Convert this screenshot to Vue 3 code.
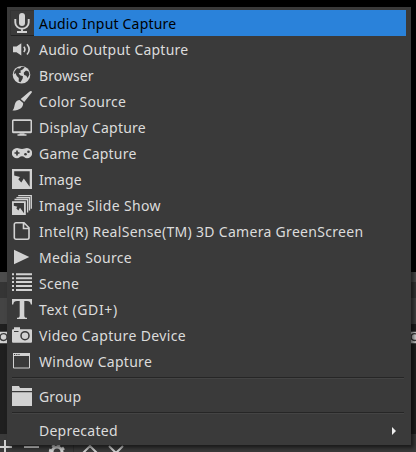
<script setup>
const items = [
  { icon: 'mic', label: 'Audio Input Capture', active: true, tracking: 0.19 },
  { icon: 'speaker', label: 'Audio Output Capture', tracking: 0.22 },
  { icon: 'globe', label: 'Browser', tracking: 0.05 },
  { icon: 'brush', label: 'Color Source', tracking: 0.28 },
  { icon: 'display', label: 'Display Capture', tracking: 0.2 },
  { icon: 'game', label: 'Game Capture', tracking: 0.2 },
  { icon: 'image', label: 'Image', tracking: 0.1 },
  { icon: 'slides', label: 'Image Slide Show', tracking: 0.34 },
  { icon: 'file', label: 'Intel(R) RealSense(TM) 3D Camera GreenScreen', tracking: 0.3 },
  { icon: 'play', label: 'Media Source', tracking: 0.31 },
  { icon: 'list', label: 'Scene', tracking: 0.25 },
  { icon: 'text', label: 'Text (GDI+)', tracking: 0.6 },
  { icon: 'camera', label: 'Video Capture Device', tracking: 0.36 },
  { icon: 'window', label: 'Window Capture', tracking: 0.28 },
  { separator: true },
  { icon: 'folder', label: 'Group', tracking: 0.15 },
  { separator: true },
  { label: 'Deprecated', submenu: true, tracking: 0.25 },
]

const icons = {
  mic: '<rect x="7" y="0" width="6" height="13" rx="3"/><path d="M3.3 6v3.5a6.7 6.2 0 0 0 13.4 0V6M10 15.5V19M5 19h10" fill="none" stroke="currentColor" stroke-width="1.9"/>',
  speaker: '<path d="M1 7.600h3.500L9.300 4.300v12.200L4.500 13.200H1z"/><path d="M11.800 7.800q2.200 2.600 0 5.200M15 5.300q4.300 5.100 0 10.200" fill="none" stroke="currentColor" stroke-width="1.600"/>',
  globe: '<circle cx="9.5" cy="9.7" r="8.8"/><path d="M9.500 1.700 12.700 2 11 4.300 8.300 5.800 9 7.600 6.700 8.300 8 10.200l3 1.100-.4 2.500-2.100 3.400-1.800-.6.1-3.600-2-2.100-1.400-3L1.900 9.600l.5-3L5 3.300 8 3.500zM14 5.500l2.500 1 .9 3-1.800 3.400-1.300-2.100-2.100-.7-.5-2.400z" fill="#3a3a3a"/>',
  brush: '<path d="M19.5.2c.6.4.5 1-.1 1.8l-7.2 9-3.5-3.1L17.3.8c.9-.7 1.6-.9 2.2-.6zM7.6 9l3.5 3.1c.4 3.9-2.9 7.3-10.6 7.5 2.2-2.6 1.6-5 2.8-7.6C4.200 10.100 5.800 9.200 7.600 9z"/>',
  display: '<path d="M1.500 2.300h17A1.500 1.500 0 0 1 20 3.800v11a1.500 1.500 0 0 1-1.500 1.500h-17A1.500 1.500 0 0 1 0 14.800v-11a1.500 1.500 0 0 1 1.500-1.500zm0 1.700v10.200h17V4zM7.500 16h5v1.200h2v1.500h-9v-1.500h2z" fill-rule="evenodd"/>',
  game: '<path d="M5 5c2 0 2.500 1 5 1s3-1 5-1a5 5 0 0 1 0 10.300c-2.300 0-2.700-2-5-2s-2.700 2-5 2A5 5 0 0 1 5 5z"/><path d="M2.500 10h5M5 7.500v5" stroke="#3a3a3a" stroke-width="1.700"/><circle cx="13.500" cy="11.200" r="1.300" fill="#3a3a3a"/><circle cx="16.500" cy="8.700" r="1.300" fill="#3a3a3a"/>',
  image: '<path d="M0 0h20v20H0z"/><path d="M2.200 2.300h15.500v15.400L11.800 9.500 9.300 13.500 6.300 10.200 8 8 2.200 6.500z" fill="#3a3a3a"/>',
  slides: '<path d="M6.200.7h13.100v13M4.400 2.600h13.100v13M2.500 4.500h13.100v13" fill="none" stroke="currentColor" stroke-width="1.300"/><path d="M0 6.200h13.800V20H0z"/><path d="M1.800 8h10.200v10.200L8 12.800l-1.700 2.700-2-2.200 1.100-1.500-3.600-1z" fill="#3a3a3a"/>',
  file: '<path d="M4 1.800h8l5 5v9.700a1.700 1.700 0 0 1-1.700 1.700H4a1.700 1.700 0 0 1-1.700-1.700v-13A1.700 1.700 0 0 1 4 1.800zM11.500 2v5.500H17" fill="none" stroke="currentColor" stroke-width="1.600"/>',
  play: '<path d="M2 2.700 17.300 10 2 17.300z"/>',
  list: '<path d="M4 .3h16v2H4zm0 3.900h16v2H4zm0 3.900h16v2H4zm0 3.900h16v2H4zm0 3.900h16v2H4zM0 .3h2v2H0zm0 3.900h2v2H0zm0 3.900h2v2H0zm0 3.900h2v2H0zm0 3.900h2v2H0z"/>',
  text: '<path d="M0 0h20v5.500h-1.200C18.300 2.800 17.400 2 15 2h-2.700v14.500c0 1.800.7 2.300 2.700 2.300V20H5v-1.200c2 0 2.700-.5 2.700-2.300V2H5C2.600 2 1.700 2.800 1.200 5.500H0z"/>',
  camera: '<path d="M2 2.300h6v2h11a1 1 0 0 1 1 1v11.500a1 1 0 0 1-1 1H1a1 1 0 0 1-1-1V5.300a1 1 0 0 1 1-1h1z"/><circle cx="13" cy="10.700" r="4" fill="none" stroke="#3a3a3a" stroke-width="1.500"/><path d="M2 6.500h4.500" stroke="#3a3a3a"/>',
  window: '<path d="M1.500 2.500h16v14.500h-16z" fill="none" stroke="currentColor" stroke-width="1"/><path d="M1 2h17v3H1z"/><path d="M2 3.500h1.200m1 0h1.200m1 0h1.200" stroke="#3a3a3a"/>',
  folder: '<path d="M0 0h7l1 2H20v3H0zM0 6.300h20V20H0z"/>',
}
</script>

<template>
  <div class="desktop">
    <div class="preview"></div>
    <div class="strip"></div>
    <div class="gap"></div>
    <div class="header"></div>
    <div class="dock">
      <svg class="peek" viewBox="0 0 20 20" v-html="icons.camera"></svg>
      <svg class="peek" viewBox="0 0 20 20" v-html="icons.camera"></svg>
    </div>
    <div class="toolbar">
      <svg width="140" height="18" viewBox="0 434 140 18" fill="none" stroke="#d2d2d2" stroke-width="2">
        <path d="M-2 447H12M5 440V454M24 447H39M83 453l7-7 7 7M109 446l7 7 7-7" />
        <circle cx="57" cy="452" r="5" stroke-width="3" />
        <circle cx="57" cy="452" r="7" stroke-width="2.500" stroke-dasharray="3 2.500" />
        <path d="M73.500 445V452" stroke="#303030" stroke-width="1" />
      </svg>
    </div>

    <nav class="menu">
      <template v-for="(item, i) in items" :key="i">
        <div v-if="item.separator" class="separator"></div>
        <div v-else class="row" :class="{ active: item.active, submenu: item.submenu }">
          <span class="icon">
            <svg v-if="item.icon" width="20" height="20" viewBox="0 0 20 20" fill="currentColor" v-html="icons[item.icon]"></svg>
          </span>
          <span class="label" :style="{ letterSpacing: item.tracking + 'px' }">{{ item.label }}</span>
          <svg v-if="item.submenu" class="arrow" width="4" height="8" viewBox="0 0 4 8"><path d="M0 0 4 4 0 8z" fill="#eee" /></svg>
        </div>
      </template>
    </nav>
  </div>
</template>

<style>
body { margin: 0; overflow: hidden; background: #000; }
</style>

<style scoped>
.desktop {
  position: relative;
  display: flex;
  flex-direction: column;
  width: 416px;
  height: 452px;
  overflow: hidden;
  background: #000;
}
.preview { height: 272px; background: #000; }
.strip { height: 10px; background: #4c4c4c; }
.gap { height: 16px; background: #353535; }
.header { height: 26px; background: #444; }
.dock {
  display: flex;
  justify-content: space-between;
  box-sizing: border-box;
  height: 110px;
  padding-top: 4px;
  margin: 0 -6px 0 -9px;
  background: #1f1f1f;
}
.peek { width: 20px; height: 17px; fill: #d2d2d2; }
.toolbar { height: 18px; background: #3a3a3a; }
.toolbar svg { display: block; }
.menu {
  position: absolute;
  left: 7px;
  top: 7px;
  box-sizing: border-box;
  width: 404px;
  height: 438px;
  padding: 3px 5px 1px 3px;
  background: #3a3a3a;
  color: #dcdcdc;
  font: 14px/26px "Noto Sans", sans-serif;
  box-shadow: 3px 3px 4px rgba(0, 0, 0, 0.55);
}
.row { display: flex; align-items: center; height: 26px; }
.icon {
  display: flex;
  box-sizing: border-box;
  flex: none;
  width: 24px;
  height: 26px;
  padding: 3px 2px;
  color: #d2d2d2;
}
.label {
  box-sizing: border-box;
  flex: 1;
  height: 26px;
  padding: 1px 0 0 5px;
  white-space: nowrap;
}
.submenu .label { padding-top: 0; }
.active .label { background: #2a82da; color: #000; }
.active .icon { box-shadow: inset 1px 1px #333, inset 0 -1px #222; }
.separator {
  box-sizing: border-box;
  height: 9px;
  margin: 0 2px;
  padding-top: 3px;
}
.separator::before {
  content: "";
  display: block;
  height: 1px;
  background: #262626;
  border-bottom: 1px solid #444;
}
.arrow { margin-right: 10px; }
</style>
